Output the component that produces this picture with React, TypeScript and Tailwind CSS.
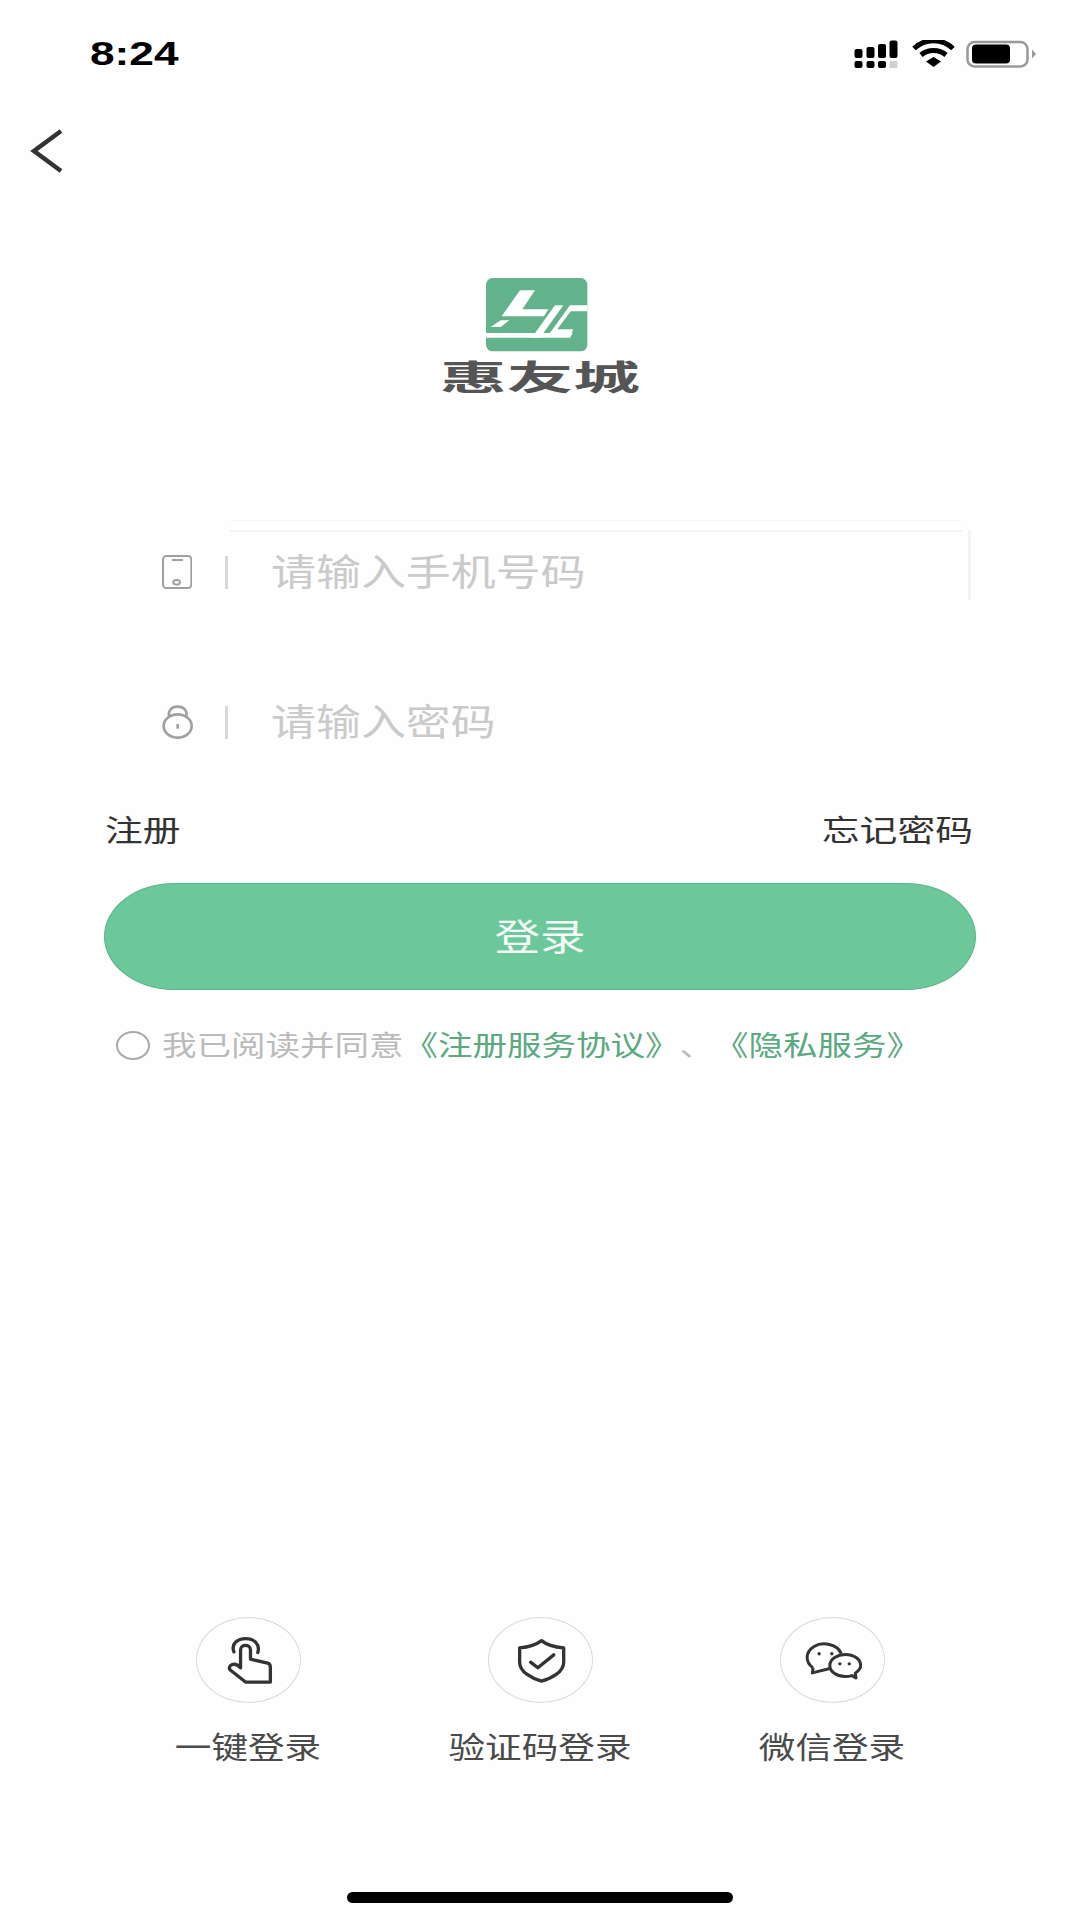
import React from 'react';

const cjk = 'font-["Liberation_Sans","Noto_Sans_CJK_SC",sans-serif]';

const StatusIcons = () => (
  <svg className="w-[182px] h-[28px]" viewBox="854 39 182 28">
    {/* signal */}
    <rect x="854.5" y="48" width="8" height="9" rx="2" fill="#000" />
    <rect x="866.5" y="46" width="8" height="11" rx="2" fill="#000" />
    <rect x="878" y="43" width="8" height="14" rx="2" fill="#000" />
    <rect x="889.5" y="39.5" width="8" height="17.5" rx="2" fill="#000" />
    <rect x="854.5" y="60" width="8" height="7" rx="2" fill="#000" />
    <rect x="866.5" y="60" width="8" height="7" rx="2" fill="#000" />
    <rect x="878" y="60" width="8" height="7" rx="2" fill="#000" />
    <rect x="889.5" y="60" width="8" height="7" rx="1" fill="#d0d0d0" />
    {/* wifi */}
    <path d="M914 47.5C925 37 942 37 953 47.5" fill="none" stroke="#000" strokeWidth="5" />
    <path d="M921 54C928 48 939 48 946 54" fill="none" stroke="#000" strokeWidth="5" />
    <path d="M926 60.5L933.5 56L941 60.5L933.5 66Z" fill="#000" />
    {/* battery */}
    <rect x="967.5" y="41" width="60" height="24.5" rx="7" fill="none" stroke="#999" strokeWidth="2.5" />
    <rect x="972" y="43.5" width="38" height="19" rx="4" fill="#000" />
    <path d="M1032 48.5L1036 53L1032 57.5Z" fill="#999" />
  </svg>
);

const LogoMark = () => (
  <svg className="w-[114px] h-[86px] mr-[6px]" viewBox="0 0 342 258">
    <rect x="18" y="18" width="304" height="220" rx="20" fill="#62b38b" />
    <g fill="#fff">
      <path d="M120 55L165 55L127 112L205 112L192 133L65 133Z" />
      <path d="M32 165L62 145L88 145L62 165Z" />
      <path d="M225 100L250 100L180 197L155 197Z" />
      <path d="M270 100L322 100L322 118L272 118L232 172L280 172L272 190L205 190Z" />
      <path d="M18 183L278 183L270 197L18 197Z" />
    </g>
  </svg>
);

const PhoneIcon = () => (
  <svg className="w-[30px] h-[34px]" viewBox="36 28 90 102" fill="none" stroke="#a0a0a0" strokeWidth="6">
    <rect x="39" y="31" width="85" height="96" rx="10" />
    <path d="M66 43L99 43" />
    <ellipse cx="80" cy="110" rx="10" ry="7" />
  </svg>
);

const LockIcon = () => (
  <svg className="w-[31px] h-[34px]" viewBox="36 478 93 102" fill="none" stroke="#a0a0a0" strokeWidth="8">
    <path d="M58 515C52 495 65 483 83 483C101 483 114 495 108 515" />
    <ellipse cx="83" cy="541" rx="42" ry="35" />
    <path d="M83 535L83 549" />
  </svg>
);

const HandIcon = () => (
  <svg className="w-[53px] h-[53px]" viewBox="94 70 160 160" fill="none" stroke="#333" strokeWidth="10" strokeLinejoin="round" strokeLinecap="round">
    <path d="M130 124C120 98 143 84 165 84C190 84 210 100 202 126" />
    <path d="M150 172L150 118C150 100 180 100 180 118L180 146L232 158C238 160 240 164 240 170L240 215L165 215L118 178C110 168 130 150 150 172Z" />
  </svg>
);

const ShieldIcon = () => (
  <svg className="w-[53px] h-[53px]" viewBox="100 70 160 160" fill="none" stroke="#333" strokeWidth="10" strokeLinejoin="round" strokeLinecap="round">
    <path d="M183 90C165 104 140 110 117 112L117 155C117 185 155 205 183 212C212 205 250 185 250 155L250 112C228 110 200 104 183 90Z" />
    <path d="M150 155L172 172L220 133" />
  </svg>
);

const ChatIcon = () => (
  <svg className="w-[59px] h-[59px]" viewBox="92 62 176 176" fill="none" stroke="#333" strokeWidth="9" strokeLinejoin="round">
    <path d="M122 172C98 155 98 125 125 108C150 93 195 100 206 130" />
    <path d="M122 172L120 187L172 174" />
    <path d="M218 132C195 132 172 146 172 165C172 185 195 198 218 198C226 198 232 197 238 195L250 202L248 188C258 181 264 173 264 165C264 146 243 132 218 132Z" fill="#fefefe" />
    <circle cx="140" cy="130" r="5" fill="#333" stroke="none" />
    <circle cx="178" cy="130" r="5" fill="#333" stroke="none" />
    <circle cx="202" cy="160" r="5" fill="#333" stroke="none" />
    <circle cx="230" cy="160" r="5" fill="#333" stroke="none" />
  </svg>
);

const quickLogins = [
  { label: '一键登录', icon: <HandIcon /> },
  { label: '验证码登录', icon: <ShieldIcon /> },
  { label: '微信登录', icon: <ChatIcon /> },
];

const App: React.FC = () => {
  return (
    <div className={`w-[1080px] h-[1920px] flex flex-col bg-[#fefefe] overflow-hidden ${cjk}`}>
      <div className="h-[107px] flex items-center justify-between pl-[90px] pr-[44px]">
        <span className="inline-block origin-left scale-x-[1.3] -translate-y-px text-[34px] font-bold text-black leading-none">8:24</span>
        <StatusIcons />
      </div>

      <svg className="w-[34px] h-[44px] mt-[22px] ml-[30px]" viewBox="0 0 34 44" fill="none" stroke="#333" strokeWidth="4.5">
        <path d="M31 2L4 22L31 42" />
      </svg>

      <div className="flex flex-col items-center mt-[99px]">
        <LogoMark />
        <div className="mt-[2px] h-[36px] text-[34px] leading-[36px] font-bold text-[#555] scale-x-[1.96]">惠友城</div>
      </div>

      <div className="mt-[126px] mx-[104px]">
        <div className="relative h-[100px] flex items-center pl-[58px]">
          <span className="absolute left-[126px] right-[14px] top-[-2px] h-px bg-[#f3f3f3]" />
          <span className="absolute left-[126px] right-[14px] top-[8px] h-[2px] bg-[#f3f3f3]" />
          <span className="absolute right-[5px] top-[8px] h-[70px] w-[3px] bg-[#f3f3f3]" />
          <PhoneIcon />
          <div className="ml-[33px] w-[3px] h-[33px] bg-[#d8d8d8]" />
          <span className="ml-[43px] inline-block origin-left scale-x-[1.215] translate-y-px text-[37px] leading-none text-[#cacaca]">请输入手机号码</span>
        </div>
        <div className="h-[100px] flex items-center pl-[58px] mt-[50px]">
          <LockIcon />
          <div className="ml-[32px] w-[3px] h-[33px] bg-[#d8d8d8]" />
          <span className="ml-[43px] inline-block origin-left scale-x-[1.215] translate-y-px text-[37px] leading-none text-[#cacaca]">请输入密码</span>
        </div>
      </div>

      <div className="mt-[39px] mx-[104px] h-[40px] flex items-center justify-between pl-[1px] pr-[3px] text-[30px] leading-[40px] text-[#333]">
        <span className="inline-block origin-left scale-x-[1.26]">注册</span>
        <span className="inline-block origin-right scale-x-[1.26]">忘记密码</span>
      </div>

      <button className="mt-[32px] mx-[104px] h-[107px] flex items-center justify-center bg-[#6cc89a] border border-[#5cb389] rounded-[70px/53.5px]">
        <span className="inline-block scale-x-[1.23] translate-y-[2px] text-[37px] leading-none text-[#f4fbf7]">登录</span>
      </button>

      <div className="mt-[37px] ml-[116px] h-[40px] flex items-center">
        <div className="w-[34px] h-[29px] -translate-y-[2px] rounded-[50%] border-2 border-[#aaa]" />
        <span className="ml-[12px] inline-block origin-left scale-x-[1.232] whitespace-nowrap [text-spacing-trim:space-all] text-[28px] leading-[40px] text-[#bbb]">
          我已阅读并同意<span className="text-[#5aa97f]">《注册服务协议》</span>、<span className="text-[#5aa97f]">《隐私服务》</span>
        </span>
      </div>

      <div className="flex-1" />

      <div className="flex justify-center">
        {quickLogins.map(item => (
          <div key={item.label} className="w-[292px] flex flex-col items-center">
            <div className="w-[105px] h-[86px] rounded-[50%] border border-[#d9d9d9] flex items-center justify-center">
              {item.icon}
            </div>
            <span className="mt-[25px] inline-block scale-x-[1.22] whitespace-nowrap text-[30px] leading-[40px] text-[#4a4a4a]">{item.label}</span>
          </div>
        ))}
      </div>

      <div className="mt-[124px] mb-[17px] mx-auto w-[386px] h-[11px] rounded-full bg-black" />
    </div>
  );
};

export default App;
